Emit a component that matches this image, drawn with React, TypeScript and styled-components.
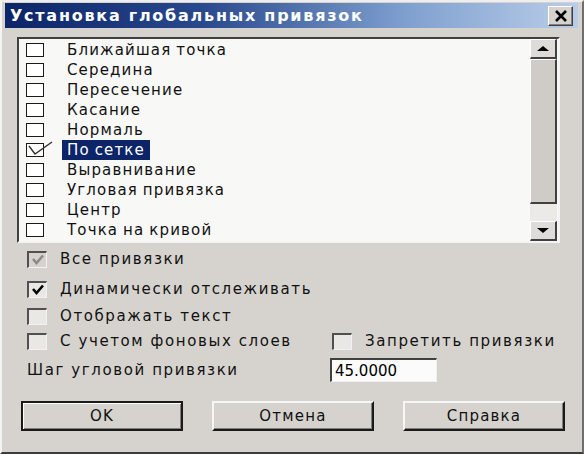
import React from 'react'
import styled, { createGlobalStyle } from 'styled-components'

const Global = createGlobalStyle`
html, body {
  margin: 0;
  padding: 0;
  background: #d6d3ce;
}
body {
  font-family: "DejaVu Sans", "Liberation Sans", sans-serif;
}
`

const listItems = [
  'Ближайшая точка',
  'Середина',
  'Пересечение',
  'Касание',
  'Нормаль',
  'По сетке',
  'Выравнивание',
  'Угловая привязка',
  'Центр',
  'Точка на кривой',
]

export default function App() {
  return (
    <>
      <Global />
      <Window>
        <TitleBar>
          <TitleText>Установка глобальных привязок</TitleText>
          <CloseButton>
            <svg width="14" height="12" viewBox="0 0 14 12">
              <path d="M2 1 L12 11 M12 1 L2 11" stroke="#000" strokeWidth="2.6" />
            </svg>
          </CloseButton>
        </TitleBar>
        <Content>
          <ListBox>
            <Items>
              {listItems.map((label, i) => (
                <Item key={label}>
                  <FlatBox>
                    {i === 5 && (
                      <TickMark width="28" height="20" viewBox="0 0 28 20">
                        <path d="M2 5 L8 13 L25 1" fill="none" stroke="#303030" strokeWidth="1.4" />
                      </TickMark>
                    )}
                  </FlatBox>
                  <ItemLabel $selected={i === 5}>{label}</ItemLabel>
                </Item>
              ))}
            </Items>
            <ScrollBar>
              <ScrollButton>
                <Arrow $dir="up" />
              </ScrollButton>
              <Thumb />
              <Track />
              <ScrollButton>
                <Arrow $dir="down" />
              </ScrollButton>
            </ScrollBar>
          </ListBox>

          <Options>
            <OptionRow $mt={5}>
              <Option>
                <Check3D $disabled>
                  <CheckSvg color="#8a8a8a" />
                </Check3D>
                <OptionLabel>Все привязки</OptionLabel>
              </Option>
            </OptionRow>
            <OptionRow $mt={8}>
              <Option>
                <Check3D>
                  <CheckSvg color="#000" />
                </Check3D>
                <OptionLabel>Динамически отслеживать</OptionLabel>
              </Option>
            </OptionRow>
            <OptionRow $mt={5}>
              <Option>
                <Check3D />
                <OptionLabel>Отображать текст</OptionLabel>
              </Option>
            </OptionRow>
            <OptionRow $mt={3}>
              <Option>
                <Check3D />
                <OptionLabel>С учетом фоновых слоев</OptionLabel>
              </Option>
              <Option>
                <Check3D />
                <OptionLabel>Запретить привязки</OptionLabel>
              </Option>
            </OptionRow>
            <StepRow>
              <OptionLabel>Шаг угловой привязки</OptionLabel>
              <NumberField>45.0000</NumberField>
            </StepRow>
          </Options>

          <Buttons>
            <Button $default>OK</Button>
            <Button>Отмена</Button>
            <Button>Справка</Button>
          </Buttons>
        </Content>
      </Window>
    </>
  )
}

const CheckSvg: React.FC<{ color: string }> = ({ color }) => (
  <svg width="16" height="14" viewBox="0 0 16 14">
    <path d="M3 6 L6.5 10 L13 2.5" fill="none" stroke={color} strokeWidth="2.6" />
  </svg>
)

const Window = styled.div`
width: 584px;
height: 454px;
box-sizing: border-box;
display: flex;
flex-direction: column;
padding: 1px 4px 0 3px;
border-left: 2px solid #f4f4f2;
border-top: 2px solid #eeeeec;
border-right: 2px solid #6e6e6c;
border-bottom: 2px solid #3c3c3c;
background: #d6d3ce;
`
const TitleBar = styled.div`
height: 25px;
display: flex;
align-items: center;
justify-content: space-between;
padding: 0 5px 0 5px;
background: linear-gradient(90deg, #0c2468 0%, #2a4a8e 35%, #7fa0cf 70%, #b9cde8 100%);
`
const TitleText = styled.span`
color: #fff;
font-weight: 700;
font-size: 16px;
letter-spacing: 1.75px;
white-space: nowrap;
`
const CloseButton = styled.div`
width: 25px;
height: 20px;
box-sizing: border-box;
display: flex;
align-items: center;
justify-content: center;
background: #d6d3ce;
border-top: 1px solid #fff;
border-left: 1px solid #fff;
border-right: 1px solid #404040;
border-bottom: 1px solid #404040;
box-shadow: inset -1px -1px 0 #808080;
`
const Content = styled.div`
display: flex;
flex-direction: column;
padding: 9px 0 0 12px;
`
const ListBox = styled.div`
width: 543px;
height: 206px;
box-sizing: border-box;
display: flex;
border-top: 2px solid #404040;
border-left: 2px solid #404040;
border-right: 2px solid #f4f4f4;
border-bottom: 2px solid #f4f4f4;
padding-right: 1px;
background: #f8f8f7;
`
const Items = styled.div`
flex: 1;
display: flex;
flex-direction: column;
padding-top: 1px;
`
const Item = styled.div`
height: 20px;
display: flex;
align-items: center;
padding-left: 7px;
`
const FlatBox = styled.div`
position: relative;
width: 18px;
height: 14px;
box-sizing: border-box;
border: 1px solid #1a1a1a;
background: #fff;
margin-right: 18px;
flex-shrink: 0;
`
const TickMark = styled.svg`
position: absolute;
left: 0;
top: -3px;
overflow: visible;
`
const ItemLabel = styled.span<{ $selected?: boolean }>`
font-size: 15px;
letter-spacing: 1.15px;
word-spacing: -1px;
padding: 1px 5px 1px 5px;
line-height: 18px;
white-space: nowrap;
color: ${p => (p.$selected ? '#fff' : '#111')};
background: ${p => (p.$selected ? '#0c2468' : 'transparent')};
`
const ScrollBar = styled.div`
width: 27px;
display: flex;
flex-direction: column;
`
const ScrollButton = styled.div`
height: 20px;
box-sizing: border-box;
display: flex;
align-items: center;
justify-content: center;
background: #dedcd8;
border-top: 1px solid #fff;
border-left: 1px solid #fff;
border-right: 2px solid #404040;
border-bottom: 2px solid #404040;
`
const Arrow = styled.div<{ $dir: 'up' | 'down' }>`
width: 0;
height: 0;
border-left: 6px solid transparent;
border-right: 6px solid transparent;
${p => (p.$dir === 'up' ? 'border-bottom: 5px solid #000;' : 'border-top: 5px solid #000;')}
`
const Thumb = styled.div`
height: 145px;
box-sizing: border-box;
background: #cfccc7;
border-top: 1px solid #fff;
border-left: 1px solid #fff;
border-right: 2px solid #404040;
border-bottom: 2px solid #404040;
`
const Track = styled.div`
flex: 1;
background: #ebeae7;
`
const Options = styled.div`
display: flex;
flex-direction: column;
padding-left: 10px;
`
const OptionRow = styled.div<{ $mt: number }>`
height: 22px;
margin-top: ${p => p.$mt}px;
display: grid;
grid-template-columns: 305px 1fr;
align-items: center;
`
const Option = styled.div`
display: flex;
align-items: center;
`
const Check3D = styled.div<{ $disabled?: boolean }>`
width: 20px;
height: 17px;
box-sizing: border-box;
display: flex;
align-items: center;
justify-content: center;
margin-right: 13px;
flex-shrink: 0;
background: ${p => (p.$disabled ? '#d6d3ce' : '#e9e8e5')};
border-top: 2px solid #505050;
border-left: 2px solid #505050;
border-right: 1px solid #f2f2f2;
border-bottom: 1px solid #f2f2f2;
`
const OptionLabel = styled.span`
font-size: 15px;
letter-spacing: 1.6px;
color: #111;
white-space: nowrap;
`
const StepRow = styled.div`
margin-top: 6px;
height: 24px;
display: grid;
grid-template-columns: 303px 107px;
align-items: center;
`
const NumberField = styled.div`
height: 24px;
box-sizing: border-box;
display: flex;
align-items: center;
padding-left: 3px;
font-size: 15px;
color: #000;
background: #fbfbfb;
border-top: 2px solid #404040;
border-left: 2px solid #404040;
border-right: 1px solid #f0f0f0;
border-bottom: 1px solid #f0f0f0;
`
const Buttons = styled.div`
margin-top: 19px;
width: 544px;
margin-left: 4px;
display: flex;
justify-content: space-between;
`
const Button = styled.div<{ $default?: boolean }>`
width: 162px;
height: 30px;
box-sizing: border-box;
display: flex;
align-items: center;
justify-content: center;
font-size: 15px;
letter-spacing: 1.2px;
color: #111;
background: #d6d3ce;
border-top: 2px solid ${p => (p.$default ? '#1a1a1a' : '#f6f6f6')};
border-left: 2px solid ${p => (p.$default ? '#1a1a1a' : '#f6f6f6')};
border-right: 2px solid #1a1a1a;
border-bottom: 2px solid #1a1a1a;
box-shadow: ${p =>
  p.$default
    ? 'inset 1px 1px 0 #fff, inset -1px -1px 0 #808080'
    : 'inset -1px -1px 0 #808080'};
`
